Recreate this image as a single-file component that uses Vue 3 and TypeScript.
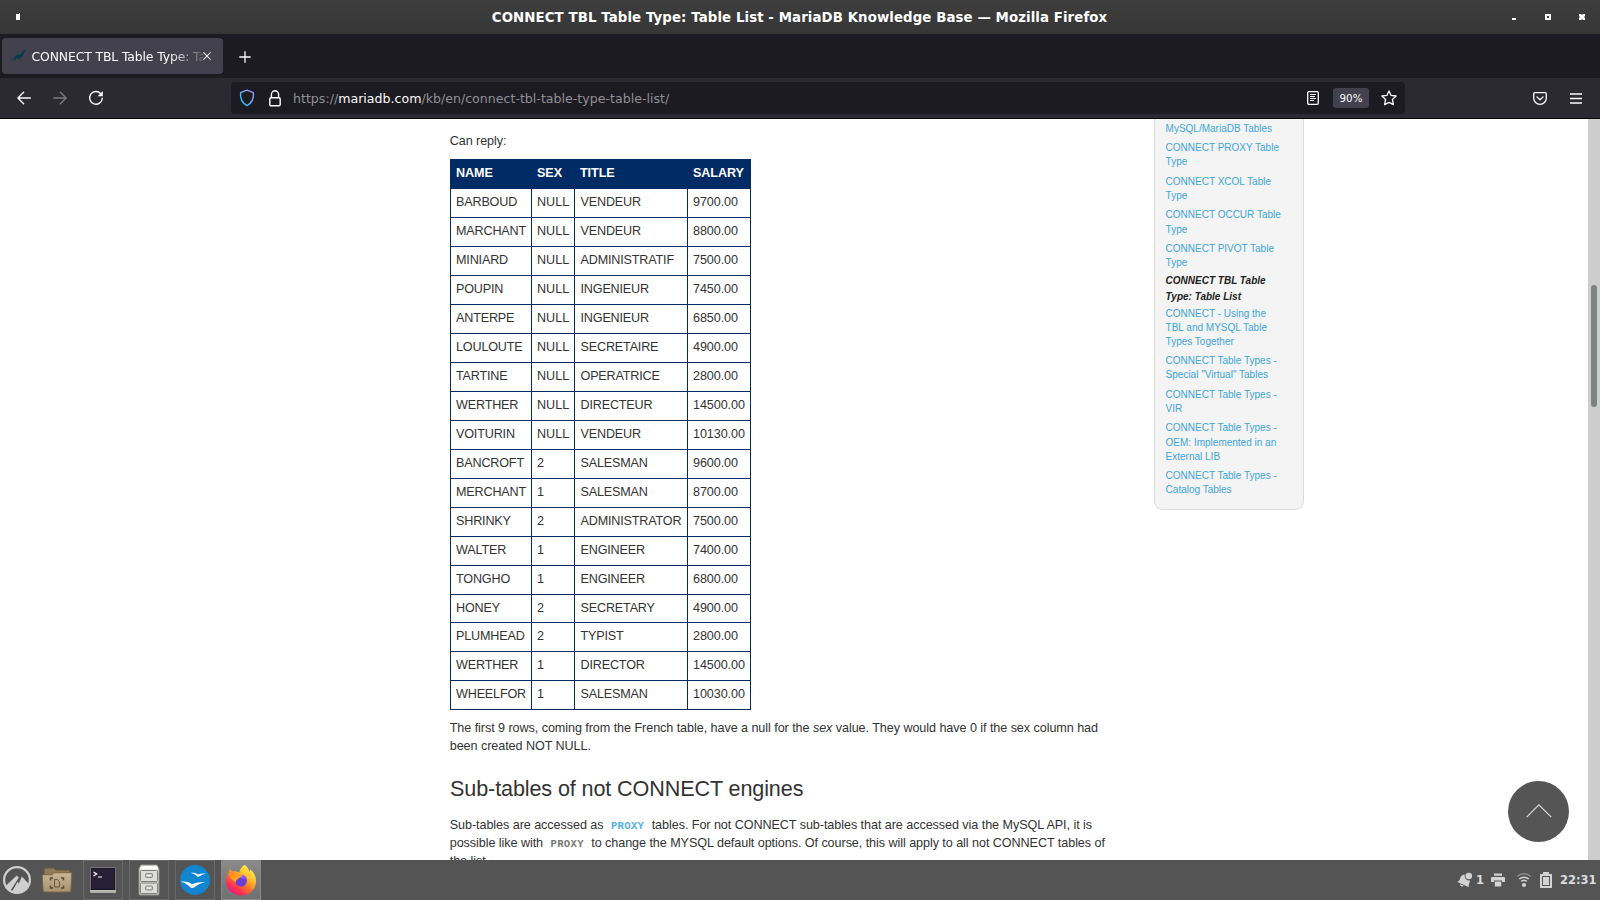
<script setup lang="ts">
interface Row { name: string; sex: string; title: string; salary: string }

const data: [string, string, string, string][] = [
  ['BARBOUD', 'NULL', 'VENDEUR', '9700.00'],
  ['MARCHANT', 'NULL', 'VENDEUR', '8800.00'],
  ['MINIARD', 'NULL', 'ADMINISTRATIF', '7500.00'],
  ['POUPIN', 'NULL', 'INGENIEUR', '7450.00'],
  ['ANTERPE', 'NULL', 'INGENIEUR', '6850.00'],
  ['LOULOUTE', 'NULL', 'SECRETAIRE', '4900.00'],
  ['TARTINE', 'NULL', 'OPERATRICE', '2800.00'],
  ['WERTHER', 'NULL', 'DIRECTEUR', '14500.00'],
  ['VOITURIN', 'NULL', 'VENDEUR', '10130.00'],
  ['BANCROFT', '2', 'SALESMAN', '9600.00'],
  ['MERCHANT', '1', 'SALESMAN', '8700.00'],
  ['SHRINKY', '2', 'ADMINISTRATOR', '7500.00'],
  ['WALTER', '1', 'ENGINEER', '7400.00'],
  ['TONGHO', '1', 'ENGINEER', '6800.00'],
  ['HONEY', '2', 'SECRETARY', '4900.00'],
  ['PLUMHEAD', '2', 'TYPIST', '2800.00'],
  ['WERTHER', '1', 'DIRECTOR', '14500.00'],
  ['WHEELFOR', '1', 'SALESMAN', '10030.00'],
]
const rows: Row[] = data.map(([name, sex, title, salary]) => ({ name, sex, title, salary }))

interface KbLink { lines: string[]; current?: boolean }
const links: KbLink[] = [
  { lines: ['MySQL/MariaDB Tables'] },
  { lines: ['CONNECT PROXY Table', 'Type'] },
  { lines: ['CONNECT XCOL Table', 'Type'] },
  { lines: ['CONNECT OCCUR Table', 'Type'] },
  { lines: ['CONNECT PIVOT Table', 'Type'] },
  { lines: ['CONNECT TBL Table', 'Type: Table List'], current: true },
  { lines: ['CONNECT - Using the', 'TBL and MYSQL Table', 'Types Together'] },
  { lines: ['CONNECT Table Types -', 'Special "Virtual" Tables'] },
  { lines: ['CONNECT Table Types -', 'VIR'] },
  { lines: ['CONNECT Table Types -', 'OEM: Implemented in an', 'External LIB'] },
  { lines: ['CONNECT Table Types -', 'Catalog Tables'] },
]
</script>

<template>
  <div class="screen">
    <header class="titlebar">
      <svg class="mark" width="4" height="8" viewBox="0 0 4 8"><path d="M0 1h3V0h1v7H0z" fill="#fff" /></svg>
      <h1>CONNECT TBL Table Type: Table List - MariaDB Knowledge Base — Mozilla Firefox</h1>
      <svg class="controls" width="74" height="8" viewBox="0 0 74 8" fill="#fff">
        <rect x="0" y="5" width="4" height="2" />
        <path d="M33 1h6v6h-6zM35 3v2h2V3z" fill-rule="evenodd" />
        <path d="M67 1h2l1 1 1-1h2v2l-1 1 1 1v2h-2l-1-1-1 1h-2V5l1-1-1-1z" />
      </svg>
    </header>

    <div class="tabs">
      <div class="tab">
        <svg width="16" height="12" viewBox="0 0 16 12"><path d="M0 10.600c1.600-.3 2.600-1.200 4-2.900C5.300 6 6 5.200 8.200 4.700 10 4.300 11.200 3.400 12.100 1.900 12.900.8 14.500.2 16 .4c-1 .7-1.500 1.400-2 2.700-.7 2.300-1.700 4.300-4.400 5.100l1.600 1.600-1.300-.1L8 8.400 6.300 8l-1.100 2.600-.9-.1.500-2C3.500 9.800 2 11 0 10.600z" fill="#053b4d" /></svg>
        <span class="tab-title">CONNECT TBL Table Type: Ta</span>
        <svg class="close" width="8" height="8" viewBox="0 0 8 8"><path d="M.4.4l7.200 7.200M7.600.4L.4 7.600" stroke="#eee" stroke-width="1.100" /></svg>
      </div>
      <svg class="plus" width="12" height="12" viewBox="0 0 12 12"><path d="M6 .3v11.400M.3 6h11.400" stroke="#fbfbfe" stroke-width="1.300" /></svg>
    </div>

    <nav class="toolbar">
      <svg class="back" width="14" height="14" viewBox="0 0 14 14" fill="none" stroke="#fbfbfe" stroke-width="1.400" stroke-linecap="round" stroke-linejoin="round"><path d="M13.300 7H.9M6.600 1.300L.9 7l5.700 5.700" /></svg>
      <svg class="forward" width="14" height="14" viewBox="0 0 14 14" fill="none" stroke="#7b7a82" stroke-width="1.400" stroke-linecap="round" stroke-linejoin="round"><path d="M.7 7h12.400M7.400 1.300L13.100 7l-5.700 5.700" /></svg>
      <svg class="reload" width="16" height="16" viewBox="0 0 16 16"><path d="M12.600 3.500A6.350 6.350 0 1 0 14.300 8.200" fill="none" stroke="#fbfbfe" stroke-width="1.400" stroke-linecap="round" /><path d="M14.800 1v5.200H9.600z" fill="#fbfbfe" /></svg>
      <div class="urlbar">
        <svg class="shield" width="16" height="18" viewBox="0 0 16 18">
          <defs><linearGradient id="shieldStroke" x1="0" y1="1" x2="1" y2="0"><stop offset=".15" stop-color="#20c3f7" /><stop offset=".55" stop-color="#73b4f6" /><stop offset="1" stop-color="#a788f0" /></linearGradient></defs>
          <path d="M8 1.200L14.400 3.700c.5 5.300-.8 9.900-6.400 12.900C2.400 13.600 1.100 9 1.600 3.700z" fill="none" stroke="url(#shieldStroke)" stroke-width="1.400" stroke-linejoin="round" />
        </svg>
        <svg class="lock" width="12" height="17" viewBox="0 0 12 17" fill="none" stroke="#fbfbfe" stroke-width="1.400"><rect x=".8" y="7.800" width="10.400" height="8" rx="1.300" /><path d="M2.400 7.800V4.500a3.600 3.700 0 0 1 7.200 0v3.300" /></svg>
        <span class="url">https://<b>mariadb.com</b>/kb/en/connect-tbl-table-type-table-list/</span>
        <svg class="reader" width="12" height="14" viewBox="0 0 12 14" fill="none" stroke="#fbfbfe" stroke-width="1.300"><rect x=".7" y=".7" width="10.600" height="12.600" rx="1.200" /><path d="M3 3.500h6M3 5.500h5M3 7.500h6M3 9.500h4" stroke-width="1" /></svg>
        <span class="zoom">90%</span>
        <svg class="star" width="16" height="16" viewBox="0 0 16 16"><path d="M8 .9l2.100 4.500 5 .6-3.700 3.400 1 5.200L8 12.300l-4.400 2.300 1-5.200L.9 6l5-.6z" fill="none" stroke="#fbfbfe" stroke-width="1.300" stroke-linejoin="round" /></svg>
      </div>
      <svg class="pocket" width="14" height="13" viewBox="0 0 14 13" fill="none" stroke="#fbfbfe" stroke-width="1.300" stroke-linecap="round" stroke-linejoin="round"><path d="M1.900.7h10.200c.7 0 1.200.5 1.200 1.200v4.200a6.300 6.200 0 0 1-12.600 0V1.900C.7 1.200 1.200.7 1.900.7z" /><path d="M4 4.900l3 2.800 3-2.800" /></svg>
      <svg class="menu" width="12" height="11" viewBox="0 0 12 11"><path d="M0 1h12M0 5.500h12M0 10h12" stroke="#fbfbfe" stroke-width="1.300" /></svg>
    </nav>

    <main>
      <article>
        <p>Can reply:</p>
        <table>
          <colgroup><col class="c-name" /><col class="c-sex" /><col class="c-title" /><col class="c-salary" /></colgroup>
          <thead><tr><th>NAME</th><th>SEX</th><th>TITLE</th><th>SALARY</th></tr></thead>
          <tbody>
            <tr v-for="(row, i) in rows" :key="i" :class="{ tight: row.name === 'HONEY' }">
              <td>{{ row.name }}</td>
              <td class="sex">{{ row.sex }}</td>
              <td class="job">{{ row.title }}</td>
              <td class="salary">{{ row.salary }}</td>
            </tr>
          </tbody>
        </table>
        <p>The first 9 rows, coming from the French table, have a null for the <em>sex</em> value. They would have 0 if the sex column had<br />been created NOT NULL.</p>
        <h2>Sub-tables of not CONNECT engines</h2>
        <p>Sub-tables are accessed as <code class="link">PROXY</code> tables. For not CONNECT sub-tables that are accessed via the MySQL API, it is<br />possible like with <code>PROXY</code> to change the MYSQL default options. Of course, this will apply to all not CONNECT tables of<br />the list.</p>
      </article>
      <aside>
        <ul>
          <li v-for="(link, i) in links" :key="i" :class="{ current: link.current }">
            <template v-for="(line, n) in link.lines" :key="n"><br v-if="n > 0" />{{ line }}</template>
          </li>
        </ul>
      </aside>
      <div class="scrollbar"><div class="thumb"></div></div>
      <button class="to-top" aria-label="Back to top">
        <svg width="28" height="16" viewBox="0 0 28 16"><path d="M1.700 14.200L13.900 1.800l12.400 12.400" fill="none" stroke="#d8d8d8" stroke-width="1.200" /></svg>
      </button>
    </main>

    <footer class="taskbar">
      <svg class="start" width="30" height="30" viewBox="0 0 30 30">
        <circle cx="15" cy="15" r="12.900" fill="none" stroke="#cfcfcf" stroke-width="2.200" />
        <path d="M3 21.500L14.700 10.500l2.200 2.100-8.700 13.300C5.800 25 4.200 23.500 3 21.500z" fill="#cfcfcf" />
        <path d="M9.800 26.700l6-10.200.9 2.300 3.200-7.300L26.900 19c-1.700 5-6 8.900-11.900 8.900-2 0-3.700-.4-5.200-1.200z" fill="#cfcfcf" />
      </svg>
      <svg class="folder" width="32" height="30" viewBox="0 0 32 30">
        <defs><linearGradient id="folderFill" x1="0" y1="0" x2="0" y2="1"><stop offset="0" stop-color="#c8b496" /><stop offset="1" stop-color="#a8926f" /></linearGradient></defs>
        <path d="M3 13V4.500Q3 3 4.500 3H13l2 2h12.500Q29 5 29 6.500V13z" fill="#917a58" stroke="#66523a" />
        <path d="M1.200 10.700q0-1 1-1h9l2-2h16.600q1 0 1 1l-1 17.300q0 1-1 1H3.200q-1 0-1-1z" fill="url(#folderFill)" stroke="#7c6547" />
        <path d="M9.500 15.500v-2.500h2.500M20 13h2.500v2.500M22.500 20.500V23H20M12 23H9.500v-2.500" fill="none" stroke="#5d4c35" stroke-width="1.500" />
        <path d="M13.500 14.500h2.800l2.200 2.200v5.300h-5z" fill="none" stroke="#6b583d" />
      </svg>
      <div class="task">
        <svg width="28" height="28" viewBox="0 0 28 28"><path d="M1 24h26v2q0 1-1 1H2q-1 0-1-1z" fill="#aeb0a8" /><rect x="1" y="1" width="26" height="23.500" rx="1.500" fill="#d9dad4" /><rect x="2" y="2" width="24" height="21.500" fill="#272034" stroke="#15101e" /><path d="M4.500 6l3.200 2-3.200 2M9 11h4" fill="none" stroke="#fff" stroke-width="1.200" /></svg>
      </div>
      <div class="task">
        <svg width="24" height="32" viewBox="0 0 24 32">
          <defs><linearGradient id="cabinet" x1="0" y1="0" x2="0" y2="1"><stop offset="0" stop-color="#f3f4ef" /><stop offset="1" stop-color="#c2c3bd" /></linearGradient></defs>
          <path d="M4 1h16l2 4v25q0 1-1 1H3q-1 0-1-1V5z" fill="url(#cabinet)" stroke="#8e908a" />
          <path d="M4 2h16l1 3H3z" fill="#fbfbf8" />
          <g fill="#dcddd8" stroke="#80827c"><rect x="3.500" y="6.500" width="17" height="11" rx=".8" /><rect x="3.500" y="19" width="17" height="10.500" rx=".8" /></g>
          <g fill="#c5c6c2" stroke="#777" stroke-width=".8"><rect x="8.500" y="9.500" width="7" height="4" rx="1" /><rect x="8.500" y="22" width="7" height="4" rx="1" /></g>
          <path d="M10 11.200q2 1.200 4 0M10 23.700q2 1.200 4 0" fill="none" stroke="#fff" />
        </svg>
      </div>
      <div class="task">
        <svg width="30" height="30" viewBox="0 0 30 30"><circle cx="15" cy="15" r="15" fill="#1285d1" /><path d="M10.800 8c2.900-.4 5.400.1 7.100 1.500 2.400-1 5-1.300 8.300-.8-2.600.4-4.400 1.100-6.500 2.500-1.200.8-2.100.7-2.900-.1C15.300 9.500 13.600 8.500 10.800 8zM.6 16.800c4.200-.9 8.300-.1 11.300 2.400 4-2 8.400-2.500 13.400-1.700-4.300.5-7.600 2-10.900 4.700-1.500 1.200-2.700 1.200-4.100 0-3-3-5.500-4.500-9.700-5.400z" fill="#fff" /></svg>
      </div>
      <div class="task active">
        <svg width="32" height="32" viewBox="0 0 32 32">
          <defs>
            <linearGradient id="foxBody" x1=".85" y1=".05" x2=".2" y2=".95"><stop offset="0" stop-color="#fff44f" /><stop offset=".3" stop-color="#ffc52e" /><stop offset=".55" stop-color="#ff7a2a" /><stop offset=".8" stop-color="#ff3350" /><stop offset="1" stop-color="#e31587" /></linearGradient>
            <linearGradient id="foxHead" x1="0" y1="0" x2="1" y2="1"><stop offset="0" stop-color="#ff8a1e" /><stop offset="1" stop-color="#ffb02a" /></linearGradient>
          </defs>
          <path d="M19.500.8c3 1.800 4.300 4.400 4.800 7 .6-.7.8-1.600.7-2.600 3.800 2.900 6 6.800 6 11.700C31 25.500 24.200 31.500 16 31.500S1 25.300 1 17.300c0-3.800 1.200-6.600 3-8.800 0-1.800.4-3 1.300-4 .4 1.700 1.200 2.500 2.300 3 2.700-.5 5 .1 6.600 1.300 1-4 2.800-6.200 5.300-8z" fill="url(#foxBody)" />
          <circle cx="16" cy="16.800" r="5.900" fill="#6b3fd4" />
          <path d="M13 12c4-2.500 9-.5 9.200 4-1.500-1.800-3.500-1.800-5-1.200z" fill="#9059ff" />
          <path d="M3.500 9c4-1.200 8 .1 10.300 2.100h3.600c-.4 1.900-2 2.500-4.100 3.200-.6 1.400-2.500 1.800-2.500 4.200-2.500-2-6.300-4-7.300-9.500z" fill="url(#foxHead)" />
        </svg>
      </div>
      <div class="tray">
        <svg class="bell" width="16" height="16" viewBox="0 0 16 16" fill="#d3d3d3"><circle cx="11.800" cy="4" r="3.300" /><path d="M7.800 2.500C5.300 2.600 3.700 4.300 3 6.800 2.500 8.600 1.500 9.500 0 9.800l11.800 5.400c-.4-1.700 0-3.200.8-4.800.3-.7.400-1.300.4-1.900C9.800 9 7 6.500 7.800 2.500zM3 12l3.800 1.800c-1.200 1.600-3.900.6-3.800-1.800z" /></svg>
        <span class="count">1</span>
        <svg class="printer" width="14" height="14" viewBox="0 0 14 14" fill="#d3d3d3"><path d="M3 .5h8v2.200H3zM1 3.900h12q1 0 1 1V9h-3V7.500H3V9H0V4.900q0-1 1-1zM3.800 8.500h6.400v5H3.800z" /></svg>
        <svg class="wifi" width="14" height="14" viewBox="0 0 14 14" fill="none" stroke="#d3d3d3" stroke-width="1.500"><path d="M.4 3.500a9.500 9.500 0 0 1 13.200 0" stroke="#8b8b8b" /><path d="M2.300 6a7 7 0 0 1 9.400 0M4.300 8.400a4.200 4.200 0 0 1 5.400 0" /><circle cx="7" cy="11.900" r="2" fill="#d3d3d3" stroke="none" /></svg>
        <svg class="battery" width="12" height="16" viewBox="0 0 12 16"><path d="M3 0h6v2h3v14H0V2h3zM2 4v10h8V4z" fill="#d3d3d3" fill-rule="evenodd" /><rect x="3" y="5" width="6" height="8" fill="#d3d3d3" /></svg>
        <time>22:31</time>
      </div>
    </footer>
  </div>
</template>

<style>
body { margin: 0; overflow: hidden; }
</style>

<style scoped>
* { box-sizing: border-box; }
svg { display: block; flex: none; }
.screen { width: 1600px; height: 900px; display: flex; flex-direction: column; overflow: hidden; background: #fff; font-family: 'DejaVu Sans', sans-serif; white-space: nowrap; }

.titlebar { flex: none; height: 34px; display: flex; align-items: center; justify-content: space-between; padding: 0 14px 0 16px; background: linear-gradient(#3e3e3e, #363636); color: #fff; }
.titlebar h1 { margin: 0 0 0 67px; padding-top: 2px; font-size: 13.333px; line-height: 16px; letter-spacing: .088px; }

.tabs { flex: none; height: 44px; display: flex; align-items: center; padding-left: 2px; background: #1c1b22; }
.tab { width: 221px; height: 36px; display: flex; align-items: center; padding-left: 8px; border-radius: 4px; background: #42414d; color: #fbfbfe; }
.tab-title { width: 171px; padding-top: 2px; margin-left: 5.500px; font-size: 12.400px; line-height: 18px; letter-spacing: -.12px; -webkit-mask-image: linear-gradient(90deg, #000 136px, transparent 178px); mask-image: linear-gradient(90deg, #000 136px, transparent 178px); }
.close { margin-left: .5px; }
.plus { margin: 2px 0 0 15.500px; }

.toolbar { flex: none; height: 41px; display: flex; align-items: center; padding-left: 17px; border-bottom: 1px solid #08080a; background: #2b2a33; }
.forward { margin-left: 22px; }
.reload { margin-left: 21px; }
.urlbar { width: 1174px; height: 32px; margin-left: 127px; display: flex; align-items: center; padding-left: 8px; border-radius: 4px; background: #1c1b22; }
.lock { margin-left: 14px; }
.url { width: 1014px; padding-top: 2px; margin-left: 12px; color: #8f8f95; font-size: 12.600px; line-height: 18px; }
.url b { color: #fbfbfe; font-weight: 400; }
.zoom { width: 36px; height: 20px; margin-left: 14px; border-radius: 3px; background: #42414d; color: #fbfbfe; font-size: 10.300px; line-height: 20px; text-align: center; }
.star { margin-left: 12px; }
.pocket { margin-left: 128px; }
.menu { margin-left: 23px; }

main { position: relative; flex: none; height: 741px; display: flex; overflow: hidden; color: #333; font-family: 'Liberation Sans', sans-serif; font-size: 12.600px; line-height: 18px; }
article { width: 704px; flex: none; margin-left: 450px; padding-top: 12.600px; letter-spacing: -.063px; }
p { margin: 0 0 0 -.3px; }
table { width: 301px; margin: 9.400px 0 9px; border-collapse: collapse; table-layout: fixed; }
.c-name { width: 81px; }
.c-sex { width: 43px; }
.c-title { width: 113px; }
.c-salary { width: 63px; }
tr { height: 29px; }
tr.tight { height: 28px; }
th, td { padding: 4px 0 0 5px; border: 1px solid #002b64; text-align: left; vertical-align: top; letter-spacing: -.17px; }
th { background: #002b64; color: #fff; letter-spacing: -.08px; }
td.sex { letter-spacing: 0; }
td.job { padding-left: 5.500px; }
td.salary { letter-spacing: -.08px; }
h2 { margin: 19.700px 0 13.300px; font-size: 21.600px; font-weight: 400; line-height: 28px; letter-spacing: -.12px; }
code { padding: 0 4px; color: #777; font: bold 10.600px/1 'Liberation Mono', monospace; letter-spacing: .3px; }
.link { color: #56b0de; }

aside { width: 150px; height: 391px; flex: none; padding: 0 0 0 10.600px; border: 1px solid #ddd; border-top: 0; border-radius: 0 0 9px 9px; background: #f4f4f4; }
ul { margin: .1px 0 0; padding: 0; list-style: none; }
li { padding: 2.700px 0; color: #3ea5da; font-size: 10px; line-height: 14.110px; }
li.current { margin: -.2px 0 -.9px; padding: 0; color: #222; font-weight: bold; font-style: italic; line-height: 16px; }

.scrollbar { width: 12px; margin-left: auto; padding: 166px 3px 0; background: #cdcdcd; }
.thumb { height: 122px; border-radius: 3px; background: #7d8282; }
.to-top { position: absolute; right: 31px; bottom: 18.500px; width: 61px; height: 61px; display: flex; align-items: center; justify-content: center; padding: 0; border: 0; border-radius: 50%; background: #555; }

.taskbar { flex: none; height: 40px; display: flex; align-items: center; padding-left: 2px; background: #545454; }
.folder { margin: 0 9px 0 9px; }
.task { width: 40px; height: 40px; margin-left: 6px; display: flex; align-items: center; justify-content: center; border: 1px solid #6a6a6a; }
.folder + .task { margin-left: 1px; }
.task.active { border-color: #8a8a8a; background: linear-gradient(#8a8a8a, #707070); }
.tray { height: 40px; display: flex; align-items: center; margin-left: auto; padding-right: 3.500px; color: #dcdcdc; font-size: 11.500px; font-weight: bold; line-height: 14px; }
.count { margin-left: 3px; }
.printer { margin-left: 7px; }
.wifi { margin-left: 12px; }
.battery { margin-left: 9px; }
.tray time { margin-left: 8px; }
</style>
